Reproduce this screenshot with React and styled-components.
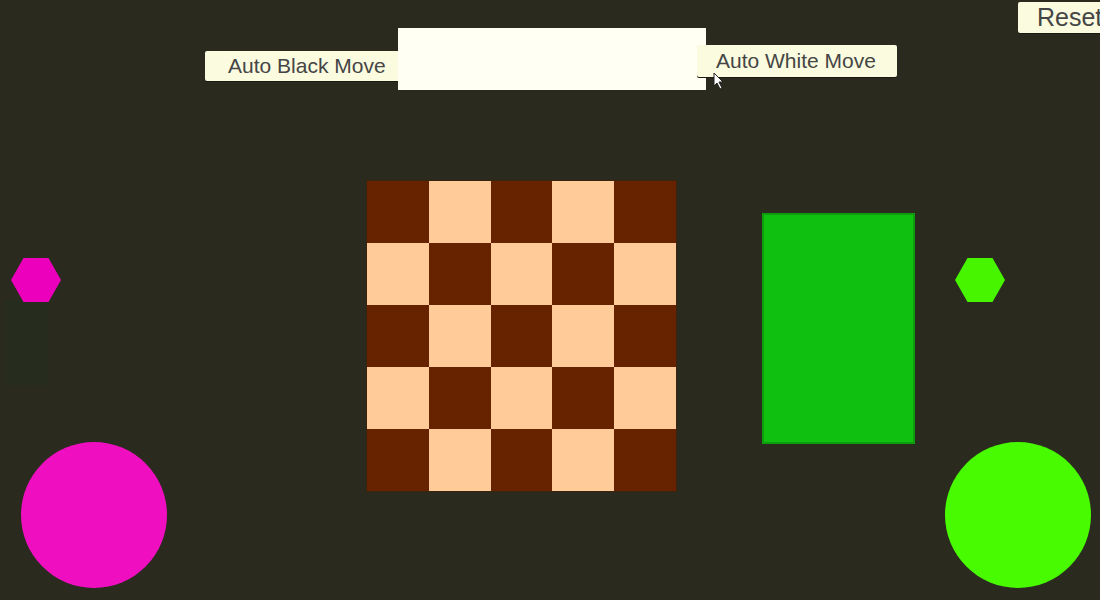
import React from 'react'
import styled, { createGlobalStyle } from 'styled-components'

const GlobalStyle = createGlobalStyle`
  html, body {
    margin: 0;
    padding: 0;
    background: #2a2a1e;
  }
  body {
    font-family: "Liberation Sans", Arial, sans-serif;
  }
`

const Stage = styled.div`
  position: relative;
  width: 1100px;
  height: 600px;
  overflow: hidden;
  background: #2a2a1e;
  display: flex;
  flex-direction: column;
`

const TopBar = styled.div`
  height: 120px;
  flex-shrink: 0;
  display: flex;
  align-items: flex-start;
  padding-left: 205px;
`

const UiButton = styled.button`
  flex-shrink: 0;
  box-sizing: border-box;
  width: ${p => p.$w}px;
  height: ${p => p.$h}px;
  margin-top: ${p => p.$top}px;
  margin-left: ${p => p.$left || 0}px;
  padding: 0 0 0 ${p => p.$pad}px;
  border: none;
  border-radius: 2px;
  background: #fbfbdf;
  color: #454545;
  font-family: "Liberation Sans", Arial, sans-serif;
  font-size: ${p => p.$fs}px;
  text-align: left;
  white-space: nowrap;
  z-index: ${p => p.$z || 1};
  box-shadow: 0 1px 0 #1a1a12;
`

const InfoBox = styled.div`
  flex-shrink: 0;
  width: 308px;
  height: 62px;
  margin-top: 28px;
  margin-left: -15px;
  background: #fffff3;
  z-index: 2;
`

const Body = styled.div`
  flex: 1;
  display: flex;
  align-items: flex-start;
`

const SideCol = styled.div`
  width: ${p => p.$w}px;
  height: 100%;
  flex-shrink: 0;
  display: flex;
  flex-direction: column;
`

const Hex = styled.div`
  width: 50px;
  height: 44px;
  margin-top: 138px;
  margin-left: ${p => p.$left}px;
  background: ${p => p.$color};
  clip-path: polygon(25% 0, 75% 0, 100% 50%, 75% 100%, 25% 100%, 0 50%);
`

const Shadow = styled.div`
  width: 43px;
  height: 85px;
  margin-top: -2px;
  margin-left: 5px;
  background: #262d1e;
`

const Ball = styled.div`
  width: 146px;
  height: 146px;
  margin-top: auto;
  margin-bottom: 12px;
  margin-left: ${p => p.$left}px;
  border-radius: 50%;
  background: ${p => p.$color};
`

const Board = styled.div`
  flex-shrink: 0;
  margin-left: 197px;
  margin-top: 61px;
  width: 309px;
  height: 310px;
  display: grid;
  grid-template-columns: repeat(5, 1fr);
  grid-template-rows: repeat(5, 1fr);
  box-shadow: 0 0 0 1px #3a2410;
`

const Cell = styled.div`
  background: ${p => (p.$dark ? '#672200' : '#ffcc99')};
`

const Card = styled.div`
  flex-shrink: 0;
  box-sizing: border-box;
  margin-left: 86px;
  margin-top: 93px;
  width: 153px;
  height: 231px;
  background: #10c010;
  border: 2px solid #0b9d0b;
`

const Cursor = styled.svg`
  position: absolute;
  left: 713px;
  top: 72px;
  z-index: 5;
`

const cells = Array.from({ length: 25 }, (_, i) => (Math.floor(i / 5) + (i % 5)) % 2 === 0)

export default function App() {
  return (
    <>
      <GlobalStyle />
      <Stage>
        <TopBar>
          <UiButton $w={208} $h={30} $top={51} $pad={23} $fs={21}>Auto Black Move</UiButton>
          <InfoBox />
          <UiButton $w={200} $h={32} $top={45} $left={-9} $pad={19} $fs={21} $z={3}>Auto White Move</UiButton>
          <UiButton $w={100} $h={31} $top={2} $left={121} $pad={19} $fs={25}>Reset</UiButton>
        </TopBar>
        <Body>
          <SideCol $w={170}>
            <Hex $left={11} $color="#ec00bb" />
            <Shadow />
            <Ball $left={21} $color="#f00fc0" />
          </SideCol>
          <Board>
            {cells.map((dark, i) => <Cell key={i} $dark={dark} />)}
          </Board>
          <Card />
          <SideCol $w={185}>
            <Hex $left={40} $color="#48f500" />
            <Ball $left={30} $color="#48fb00" />
          </SideCol>
        </Body>
        <Cursor width="12" height="18" viewBox="0 0 12 18">
          <path d="M1 1 L1 14 L4 11 L7 17 L9 16 L6 10 L10 10 Z" fill="#ffffff" stroke="#222" strokeWidth="1" />
        </Cursor>
      </Stage>
    </>
  )
}
